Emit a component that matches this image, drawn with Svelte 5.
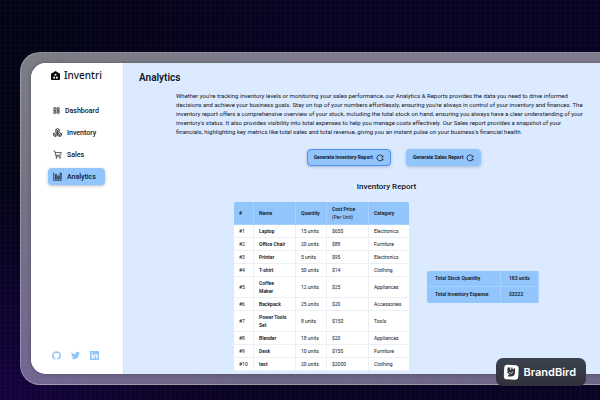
<script>
  const nav = [
    { label: 'Dashboard', icon: 'dashboard' },
    { label: 'Inventory', icon: 'inventory' },
    { label: 'Sales', icon: 'sales' },
    { label: 'Analytics', icon: 'analytics' }
  ];
  let active = $state('Analytics');
  let report = $state('Inventory');

  const rows = [
    ['Laptop', 15, 650, 'Electronics'],
    ['Office Chair', 20, 88, 'Furniture'],
    ['Printer', 5, 95, 'Electronics'],
    ['T-shirt', 50, 14, 'Clothing'],
    ['Coffee Maker', 12, 25, 'Appliances'],
    ['Backpack', 25, 20, 'Accessories'],
    ['Power Tools Set', 8, 150, 'Tools'],
    ['Blender', 18, 20, 'Appliances'],
    ['Desk', 10, 150, 'Furniture'],
    ['test', 20, 2000, 'Clothing']
  ];
</script>

<div class="stage">
  <div class="frame">
    <div class="window">
      <aside>
        <a class="brand" href="#home">
          <svg viewBox="0 0 20 20" aria-hidden="true">
            <path fill="#0b0c10" d="M10 0 20 6v12.500a1.500 1.500 0 0 1-1.500 1.500h-17A1.500 1.500 0 0 1 0 18.500V6z" />
            <path fill="#fff" d="M8 6.500h4v3.500H8zM5 12.500h4v4H5zM11 12.500h4v4h-4z" />
          </svg>
          <span>Inventri</span>
        </a>
        <nav>
          {#each nav as item}
            <a
              href="#{item.icon}"
              class:active={active === item.label}
              class:compact={item.icon === 'dashboard'}
              onclick={() => (active = item.label)}
            >
              <svg viewBox="0 0 18 18" fill="none" stroke="currentColor" aria-hidden="true">
                {#if item.icon === 'dashboard'}
                  <g stroke-width="1.800">
                    <path d="M2 2h5.500v7H2zM10.500 2H16v4h-5.500zM10.500 9H16v7h-5.500zM2 12h5.500v4H2z" />
                    <path d="M4 4.500h3M12 12h3" />
                  </g>
                {:else if item.icon === 'inventory'}
                  <path stroke-width="1.500" stroke-linejoin="round" d="M9 1 12.500 3v4L9 9 5.500 7V3zM5.500 3 9 5l3.500-2M9 5v4M4.700 9l3.800 2v4l-3.800 2L1 15v-4zM1 11l3.700 2 3.800-2M4.700 13v4M13.300 9l3.700 2v4l-3.700 2-3.800-2v-4zM9.500 11l3.800 2 3.700-2M13.300 13v4" />
                {:else if item.icon === 'sales'}
                  <path stroke-width="1.300" d="M1 2h2.500L6 12.500h9M4.200 5H16.500L15 10.300H5.500" />
                  <circle cx="7" cy="15.500" r="1.200" stroke-width="1.300" />
                  <circle cx="14" cy="15.500" r="1.200" stroke-width="1.300" />
                {:else}
                  <path stroke-width="1.500" d="M1.500 1v15.500H17.500M5 14V5h2.500v9zM9.500 14V8H12v6zM14 14V2h2.500v12z" />
                {/if}
              </svg>
              <span>{item.label}</span>
            </a>
          {/each}
        </nav>
        <div class="social">
          <a href="#github" aria-label="GitHub">
            <svg viewBox="0 0 24 24" fill="currentColor"><path d="M12 .5a12 12 0 0 0-3.800 23.400c.6.100.8-.3.800-.6v-2.100c-3.300.7-4-1.600-4-1.600-.6-1.400-1.400-1.800-1.400-1.800-1-.7.100-.7.100-.7 1.200.1 1.900 1.200 1.900 1.200 1 1.800 2.800 1.300 3.500 1 .1-.8.400-1.300.8-1.600-2.700-.3-5.500-1.300-5.500-5.900 0-1.300.5-2.400 1.200-3.200-.1-.3-.5-1.500.1-3.200 0 0 1-.3 3.300 1.200a11.500 11.500 0 0 1 6 0C17.300 5.100 18.300 5.400 18.300 5.400c.6 1.700.2 2.900.1 3.200.8.800 1.200 1.900 1.200 3.200 0 4.600-2.800 5.600-5.500 5.900.4.400.8 1.100.8 2.200v3.400c0 .3.200.7.800.6A12 12 0 0 0 12 .5z" /></svg>
          </a>
          <a href="#twitter" aria-label="Twitter">
            <svg viewBox="0 0 24 24" fill="currentColor"><path d="M24 4.600a10 10 0 0 1-2.800.8 5 5 0 0 0 2.200-2.700c-1 .6-2 1-3.100 1.200a4.900 4.900 0 0 0-8.400 4.500A14 14 0 0 1 1.700 3.200a4.900 4.900 0 0 0 1.500 6.500 5 5 0 0 1-2.200-.6v.1a4.900 4.900 0 0 0 3.900 4.800 5 5 0 0 1-2.200.1 4.900 4.900 0 0 0 4.600 3.400A9.900 9.900 0 0 1 0 19.500a14 14 0 0 0 21.500-12.400A10 10 0 0 0 24 4.600z" /></svg>
          </a>
          <a href="#linkedin" aria-label="LinkedIn">
            <svg viewBox="0 0 24 24" fill="currentColor" fill-rule="evenodd"><path d="M0 0h24v24H0zM4 9v11h3.500V9zM5.700 3.500a2 2 0 1 0 0 4.100 2 2 0 0 0 0-4.100zM9.500 9v11H13v-6c0-3 3.500-3 3.500 0v6H20v-7c0-5-5.400-5-7-2.400V9z" /></svg>
          </a>
        </div>
      </aside>

      <main>
        <h1>Analytics</h1>
        <p class="intro">
          Whether you're tracking inventory levels or monitoring your sales performance, our Analytics &amp; Reports provides the data you need to drive informed<br />
          decisions and achieve your business goals. Stay on top of your numbers effortlessly, ensuring you're always in control of your inventory and finances. The<br />
          inventory report offers a comprehensive overview of your stock, including the total stock on hand, ensuring you always have a clear understanding of your<br />
          inventory's status. It also provides visibility into total expenses to help you manage costs effectively. Our Sales report provides a snapshot of your<br />
          financials, highlighting key metrics like total sales and total revenue, giving you an instant pulse on your business's financial health.
        </p>
        <div class="actions">
          {#each ['Inventory', 'Sales'] as kind}
            <button type="button" class:chosen={report === kind} onclick={() => (report = kind)}>
              <span>Generate {kind} Report</span>
              <svg viewBox="0 0 16 16" fill="none" stroke="currentColor" stroke-width="1.600" aria-hidden="true">
                <path d="M13.300 5A6.200 6.200 0 0 0 2 6.500M2 6.500A6.200 6.200 0 0 0 13.300 11M14 3v3h-3M14 13v-3h-3" />
              </svg>
            </button>
          {/each}
        </div>
        <h2>Inventory Report</h2>
        <div class="reports">
          <table class="items">
            <colgroup><col class="c1" /><col class="c2" /><col class="c3" /><col class="c2" /><col class="c5" /></colgroup>
            <thead>
              <tr>
                <th>#</th><th>Name</th><th>Quantity</th>
                <th>Cost Price<br /><small>(Per Unit)</small></th><th>Category</th>
              </tr>
            </thead>
            <tbody>
              {#each rows as [name, qty, price, category], i}
                <tr>
                  <td>#{i + 1}</td>
                  <th scope="row">{name}</th>
                  <td>{qty} units</td>
                  <td>${price}</td>
                  <td>{category}</td>
                </tr>
              {/each}
            </tbody>
          </table>
          <table class="totals">
            <tbody>
              <tr><th scope="row">Total Stock Quantity</th><td>183 units</td></tr>
              <tr><th scope="row">Total Inventory Expense</th><td>$3222</td></tr>
            </tbody>
          </table>
        </div>
      </main>
    </div>
  </div>

  <div class="badge">
    <svg viewBox="0 0 16 16" aria-hidden="true">
      <rect x="1" y="1" width="14.500" height="14.500" rx="3.500" fill="#fff" transform="rotate(3 8 8)" />
      <path fill="#34363e" d="M4.500 3.500h2.800v3l1-1V3.500h1.200v2L12 4v4.700c0 2.300-1.500 3.800-4 3.800H5V11l1.800-.5L4.500 9z" />
      <path fill="none" stroke="#fff" stroke-width=".7" d="M6 8.200 8 9.500l2.500-2" />
    </svg>
    <span>BrandBird</span>
  </div>
</div>

<style>
  :global(body) {
    margin: 0;
    overflow: hidden;
    background: #080220;
  }
  .stage {
    box-sizing: border-box;
    display: flex;
    height: 100vh;
    padding: 52px 0 15px 20px;
    overflow: hidden;
    font-family: Roboto, 'Liberation Sans', sans-serif;
    color: #10151f;
    background:
      repeating-linear-gradient(90deg, rgba(255, 255, 255, 0.018) 0 1px, transparent 1px 5px),
      repeating-linear-gradient(rgba(255, 255, 255, 0.018) 0 1px, transparent 1px 5px),
      radial-gradient(ellipse 240px 220px at 0 100%, #15023f, transparent),
      linear-gradient(100deg, #020413, #090222 45%, #0a0224);
  }
  .frame {
    box-sizing: border-box;
    display: flex;
    flex: 0 0 calc(100% + 60px);
    padding: 10px;
    border: 1px solid rgba(255, 255, 255, 0.25);
    border-radius: 20px;
    background: linear-gradient(rgba(255, 255, 255, 0.48), rgba(226, 218, 250, 0.46));
  }
  .window {
    display: flex;
    flex: 1;
    min-width: 0;
    overflow: hidden;
    border-radius: 15px;
    background: #dbeafe;
    box-shadow: 0 0 4px rgba(0, 0, 0, 0.3);
  }
  aside {
    box-sizing: border-box;
    display: flex;
    flex: 0 0 93px;
    flex-direction: column;
    padding: 6px 18px 14px 17px;
    border-right: 1px solid #d3dfef;
    background: #fff;
  }
  a {
    color: inherit;
    text-decoration: none;
  }
  .brand {
    display: flex;
    align-items: center;
    gap: 4px;
    margin-left: 3px;
    font: 500 10px/13px 'Noto Sans', sans-serif;
  }
  .brand svg {
    width: 9px;
    height: 9px;
  }
  nav {
    display: flex;
    flex-direction: column;
    gap: 5px;
    margin-top: 20px;
  }
  nav a {
    display: flex;
    align-items: center;
    gap: 5px;
    height: 17px;
    padding: 0 5px;
    border-radius: 4px;
    font-size: 7px;
    font-weight: 500;
  }
  nav svg {
    width: 9px;
    height: 9px;
  }
  nav .compact svg {
    width: 7px;
    height: 7px;
  }
  nav .active {
    background: #93c5fd;
    box-shadow: 0 1px 3px rgba(40, 70, 120, 0.35);
  }
  .social {
    display: flex;
    gap: 10px;
    margin-top: auto;
    padding-left: 4px;
    color: #93c5fd;
  }
  .social svg {
    display: block;
    width: 9px;
    height: 9px;
  }
  main {
    display: flex;
    flex: 1;
    flex-direction: column;
    min-width: 0;
    padding: 8px 15px 0;
  }
  h1,
  h2,
  p {
    margin: 0;
  }
  h1 {
    font-size: 10px;
    font-weight: 600;
    line-height: 13px;
  }
  .intro {
    margin: 7px 0 0 37px;
    font-size: 6px;
    line-height: 9px;
    white-space: nowrap;
  }
  .actions {
    display: flex;
    justify-content: center;
    gap: 15px;
    margin: 13px 0 0 15px;
  }
  button {
    display: flex;
    align-items: center;
    gap: 3px;
    height: 17px;
    padding: 0 6px;
    border: 1px solid #93c5fd;
    border-radius: 4px;
    color: inherit;
    background: #93c5fd;
    box-shadow: 0 1px 3px rgba(40, 70, 120, 0.3);
    font: 700 5px/9px Roboto, sans-serif;
    white-space: nowrap;
  }
  button.chosen {
    border-color: #5090f4;
  }
  button svg {
    width: 8px;
    height: 8px;
  }
  h2 {
    margin-top: 15px;
    font-size: 8px;
    font-weight: 500;
    line-height: 11px;
    text-align: center;
  }
  .reports {
    display: flex;
    align-items: center;
    justify-content: center;
    gap: 18px;
    margin-top: 10px;
  }
  table {
    border-collapse: separate;
    border-spacing: 0;
    font-size: 5px;
    line-height: 8px;
    text-align: left;
    border-radius: 2px;
    overflow: hidden;
  }
  th,
  td {
    box-sizing: border-box;
    padding: 2px 0 2px 5px;
    border-bottom: 1px solid #eceff3;
    border-right: 1px solid #eceff3;
  }
  th {
    font-weight: 600;
  }
  .items {
    table-layout: fixed;
    width: 175px;
    background: #fff;
  }
  .c1 { width: 20px; }
  .c2 { width: 42px; }
  .c3 { width: 31px; }
  .c5 { width: 40px; }
  .items tbody th {
    padding-right: 7px;
  }
  tr > :last-child {
    border-right-color: transparent;
  }
  thead th {
    height: 23px;
    border-color: #a6d0fd;
    background: #93c5fd;
  }
  small {
    font-size: 5px;
    font-weight: 400;
  }
  .totals {
    width: 112px;
    background: #93c5fd;
  }
  .totals th,
  .totals td {
    padding: 3px 8px 4px;
    border-color: #a6d0fd;
    font-weight: 600;
  }
  .totals th {
    width: 74px;
  }
  .totals tr:last-child > * {
    border-bottom-color: transparent;
  }
  .badge {
    position: fixed;
    right: 14px;
    bottom: 14px;
    display: flex;
    align-items: center;
    gap: 4px;
    height: 28px;
    padding: 0 10px 0 7px;
    border-radius: 7px;
    color: #fff;
    background: linear-gradient(#3b424e, #30303b);
    font: 600 11px/14px Inter, sans-serif;
  }
  .badge svg {
    width: 16px;
    height: 16px;
  }
</style>
